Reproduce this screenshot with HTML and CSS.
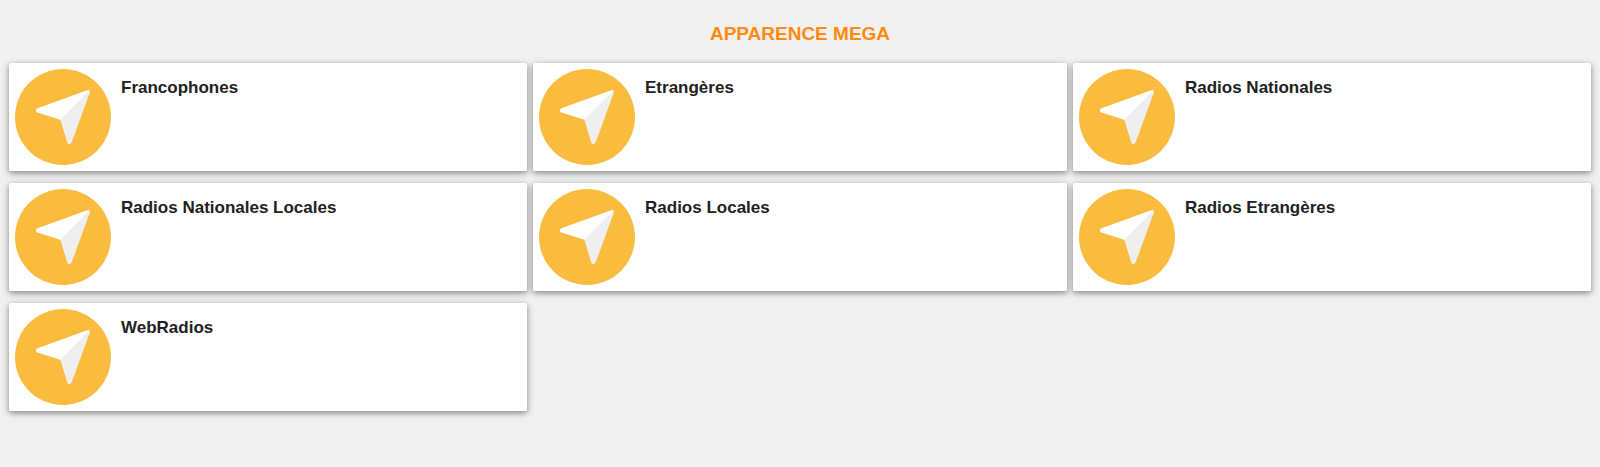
FILE: index.html
```html
<!DOCTYPE html>
<html lang="fr">
<head>
<meta charset="utf-8">
<title>Apparence Mega</title>
<link rel="stylesheet" href="styles.css">
</head>
<body>
<svg class="sprite" aria-hidden="true">
  <symbol id="plane" viewBox="0 0 96 96">
    <circle cx="48" cy="48" r="48" fill="#f9bc3f"/>
    <path d="M74.300 21.500Q73.500 20.800 72.300 21.200L22.500 39.200C20.400 40.200 20.500 42.900 22.500 43.600L45.300 50.700L46.300 51.500L74.300 23Z" fill="#fff"/>
    <path d="M74.300 21.500Q75.300 22.300 74.800 23.700L56.600 73.600C55.600 75.600 53 75.400 52.300 73.400L45.300 50.700Z" fill="#efefef"/>
  </symbol>
</svg>
<main class="page">
  <h1 class="title">APPARENCE MEGA</h1>
  <ul class="grid">
    <li class="card"><svg class="icon" aria-hidden="true"><use href="#plane"/></svg><h2 class="name">Francophones</h2></li>
    <li class="card"><svg class="icon" aria-hidden="true"><use href="#plane"/></svg><h2 class="name">Etrangères</h2></li>
    <li class="card"><svg class="icon" aria-hidden="true"><use href="#plane"/></svg><h2 class="name">Radios Nationales</h2></li>
    <li class="card"><svg class="icon" aria-hidden="true"><use href="#plane"/></svg><h2 class="name">Radios Nationales Locales</h2></li>
    <li class="card"><svg class="icon" aria-hidden="true"><use href="#plane"/></svg><h2 class="name">Radios Locales</h2></li>
    <li class="card"><svg class="icon" aria-hidden="true"><use href="#plane"/></svg><h2 class="name">Radios Etrangères</h2></li>
    <li class="card"><svg class="icon" aria-hidden="true"><use href="#plane"/></svg><h2 class="name">WebRadios</h2></li>
  </ul>
</main>
</body>
</html>
```
FILE: styles.css
```css
body {
  margin: 0;
  background: #f1f1f1;
  color: #212121;
  font-family: "Liberation Sans", Arial, sans-serif;
}
.sprite {
  display: none;
}
.page {
  padding: 23px 6px;
}
.title {
  margin: 0 0 18px;
  color: #ff8a10;
  font-size: 19px;
  line-height: 22px;
  text-align: center;
}
.grid {
  display: grid;
  grid-template-columns: 33fr 34fr 33fr;
  row-gap: 12px;
  margin: 0;
  padding: 0;
  list-style: none;
}
.card {
  display: flex;
  gap: 10px;
  margin: 0 3px;
  padding: 6px;
  border-radius: 2px;
  background: #fff;
  box-shadow: 0 2px 5px rgba(0, 0, 0, 0.3), 0 2px 10px rgba(0, 0, 0, 0.2);
}
.icon {
  flex: none;
  width: 96px;
  height: 96px;
}
.name {
  margin: 9px 0 0;
  font-size: 17px;
  line-height: 20px;
}
```
